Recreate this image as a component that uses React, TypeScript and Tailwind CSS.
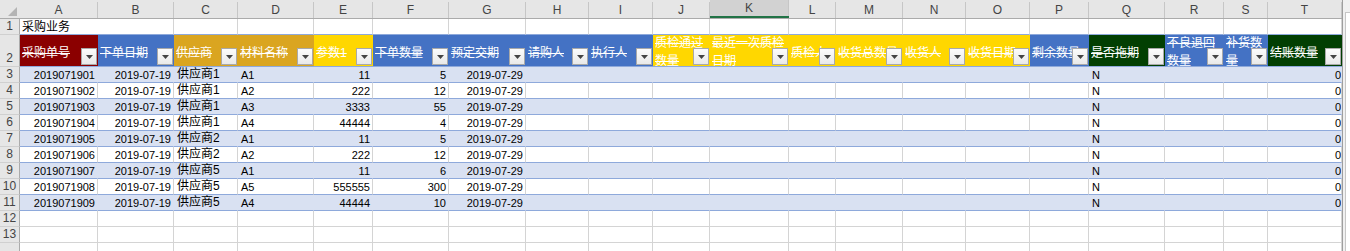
import React from 'react';

const letters = ['A', 'B', 'C', 'D', 'E', 'F', 'G', 'H', 'I', 'J', 'K', 'L', 'M', 'N', 'O', 'P', 'Q', 'R', 'S', 'T'];

const widths = [
  'w-[78px]', 'w-[76px]', 'w-[64px]', 'w-[76px]', 'w-[59px]', 'w-[76px]', 'w-[77px]', 'w-[63px]', 'w-[64px]', 'w-[57px]',
  'w-[79px]', 'w-[47px]', 'w-[67px]', 'w-[63px]', 'w-[64px]', 'w-[59px]', 'w-[76px]', 'w-[59px]', 'w-[44px]', 'w-[74px]',
];

const blue = 'bg-[#4472c4]';
const gold = 'bg-[#ffd700]';
const rod = 'bg-[#daa520]';
const green = 'bg-[#023f02]';

interface Head {
  label: string;
  bg: string;
  wrap?: boolean;
}

const heads: Head[] = [
  { label: '采购单号', bg: 'bg-[#8b0000]' },
  { label: '下单日期', bg: blue },
  { label: '供应商', bg: rod },
  { label: '材料名称', bg: rod },
  { label: '参数1', bg: gold },
  { label: '下单数量', bg: blue },
  { label: '预定交期', bg: blue },
  { label: '请购人', bg: blue },
  { label: '执行人', bg: blue },
  { label: '质检通过数量', bg: gold, wrap: true },
  { label: '最近一次质检日期', bg: gold, wrap: true },
  { label: '质检人', bg: gold },
  { label: '收货总数量', bg: gold },
  { label: '收货人', bg: gold },
  { label: '收货日期', bg: gold },
  { label: '剩余数量', bg: blue },
  { label: '是否拖期', bg: green },
  { label: '不良退回数量', bg: blue, wrap: true },
  { label: '补货数量', bg: blue, wrap: true },
  { label: '结账数量', bg: green },
];

const orders: [string, string, string, string, string][] = [
  ['2019071901', '供应商1', 'A1', '11', '5'],
  ['2019071902', '供应商1', 'A2', '222', '12'],
  ['2019071903', '供应商1', 'A3', '3333', '55'],
  ['2019071904', '供应商1', 'A4', '44444', '4'],
  ['2019071905', '供应商2', 'A1', '11', '5'],
  ['2019071906', '供应商2', 'A2', '222', '12'],
  ['2019071907', '供应商5', 'A1', '11', '6'],
  ['2019071908', '供应商5', 'A5', '555555', '300'],
  ['2019071909', '供应商5', 'A4', '44444', '10'],
];

const rightAligned = [0, 1, 4, 5, 6, 19];

function toCells(o: [string, string, string, string, string]) {
  const cells = Array(20).fill('');
  cells[0] = o[0];
  cells[1] = '2019-07-19';
  cells[2] = o[1];
  cells[3] = o[2];
  cells[4] = o[3];
  cells[5] = o[4];
  cells[6] = '2019-07-29';
  cells[16] = 'N';
  cells[19] = '0';
  return cells as string[];
}

function FilterButton() {
  return (
    <span className="absolute right-[1px] bottom-[1px] flex h-[17px] w-[16px] items-center justify-center border border-[#a9a9a9] bg-linear-to-b from-[#fcfcfc] to-[#e9e9e9]">
      <svg width="7" height="4" viewBox="0 0 7 4">
        <path d="M0 0h7L3.5 4z" fill="#444" />
      </svg>
    </span>
  );
}

function RowNumber({ n, h, bottom }: { n?: number; h: string; bottom?: boolean }) {
  return (
    <div
      className={`flex w-[20px] shrink-0 justify-center border-r border-b border-r-[#ababab] border-b-[#d0d0d0] bg-[#e6e6e6] text-[12px] text-[#444] ${h} ${
        bottom ? 'items-end leading-[16px]' : 'items-center leading-[15px]'
      }`}
    >
      {n}
    </div>
  );
}

function EmptyRow({ n, h = 'h-[16px]' }: { n?: number; h?: string }) {
  return (
    <div className="flex">
      <RowNumber n={n} h={h} />
      {widths.map((w, i) => (
        <div key={i} className={`${w} ${h} shrink-0 border-r border-b border-[#d4d4d4]`} />
      ))}
    </div>
  );
}

export default function App() {
  return (
    <div className="flex h-[251px] w-[1350px] overflow-hidden bg-white font-['Liberation_Sans','Noto_Sans_CJK_SC',sans-serif] text-black">
      <div className="flex w-[1342px] shrink-0 flex-col">
        {/* column letters */}
        <div className="flex h-[24px] border-b border-[#ababab] bg-[#e6e6e6]">
          <div className="flex w-[20px] shrink-0 items-end justify-end pr-[3px] pb-[2px]">
            <svg width="9" height="9" viewBox="0 0 9 9">
              <path d="M9 0V9H0z" fill="#b4b4b4" />
            </svg>
          </div>
          {letters.map((l, i) => (
            <div
              key={l}
              className={`flex ${widths[i]} shrink-0 items-end ${
                l === 'K' ? 'border-b-2 border-[#217346] bg-[#d2d2d2]' : ''
              }`}
            >
              <div className="flex h-[16px] flex-1 items-center justify-center text-[12px] text-[#444]">{l}</div>
              <div className="h-[16px] w-px bg-[#c6c6c6]" />
            </div>
          ))}
        </div>

        {/* row 1 */}
        <div className="flex">
          <RowNumber n={1} h="h-[16px]" />
          {widths.map((w, i) => (
            <div
              key={i}
              className={`${w} h-[16px] shrink-0 border-b border-b-[#8ea9db] ${
                i === 0 ? 'border-r-0' : 'border-r border-r-[#d4d4d4]'
              } ${i === 0 ? 'whitespace-nowrap pl-[2px] text-[12px] leading-[16px]' : ''}`}
            >
              {i === 0 ? '采购业务' : null}
            </div>
          ))}
        </div>

        {/* row 2: table header */}
        <div className="flex">
          <RowNumber n={2} h="h-[32px]" bottom />
          {heads.map((hd, i) => (
            <div
              key={i}
              className={`relative flex ${widths[i]} h-[32px] shrink-0 items-center overflow-hidden border-b border-[#8ea9db] pl-[2px] text-[12px] text-white line-through ${hd.bg} ${
                hd.wrap ? 'pt-[2px] leading-[18px]' : 'whitespace-nowrap pt-[5px] leading-[16px]'
              }`}
            >
              <span>{hd.label}</span>
              <FilterButton />
            </div>
          ))}
        </div>

        {/* data */}
        {orders.map((o, r) => {
          const band = r % 2 === 0;
          const cells = toCells(o);
          return (
            <div key={r} className="flex">
              <RowNumber n={r + 3} h="h-[16px]" />
              {cells.map((c, i) => {
                const cjk = /[^\x00-\x7f]/.test(c);
                return (
                  <div
                    key={i}
                    className={`flex ${widths[i]} h-[16px] shrink-0 items-end overflow-hidden whitespace-nowrap border-r border-b border-b-[#8ea9db] ${
                      band ? 'border-r-[#d9e1f2] bg-[#d9e1f2]' : 'border-r-[#d4d4d4]'
                    } ${rightAligned.includes(i) ? 'justify-end' : 'justify-start pl-[3px]'} ${
                      i === 19 ? 'pr-0' : 'pr-[2px]'
                    } ${cjk ? 'text-[12px] leading-[15px]' : 'text-[11px] leading-[14px]'}`}
                  >
                    {c}
                  </div>
                );
              })}
            </div>
          );
        })}

        <EmptyRow n={12} />
        <EmptyRow n={13} />
        <EmptyRow />
      </div>

      <div className="flex w-[8px] shrink-0 border-l border-[#9e9e9e] bg-[#f0f0f0]">
        <div className="mt-[12px] ml-[2px] flex-1 border-t border-l border-[#c6c6c6] bg-white" />
      </div>
    </div>
  );
}
